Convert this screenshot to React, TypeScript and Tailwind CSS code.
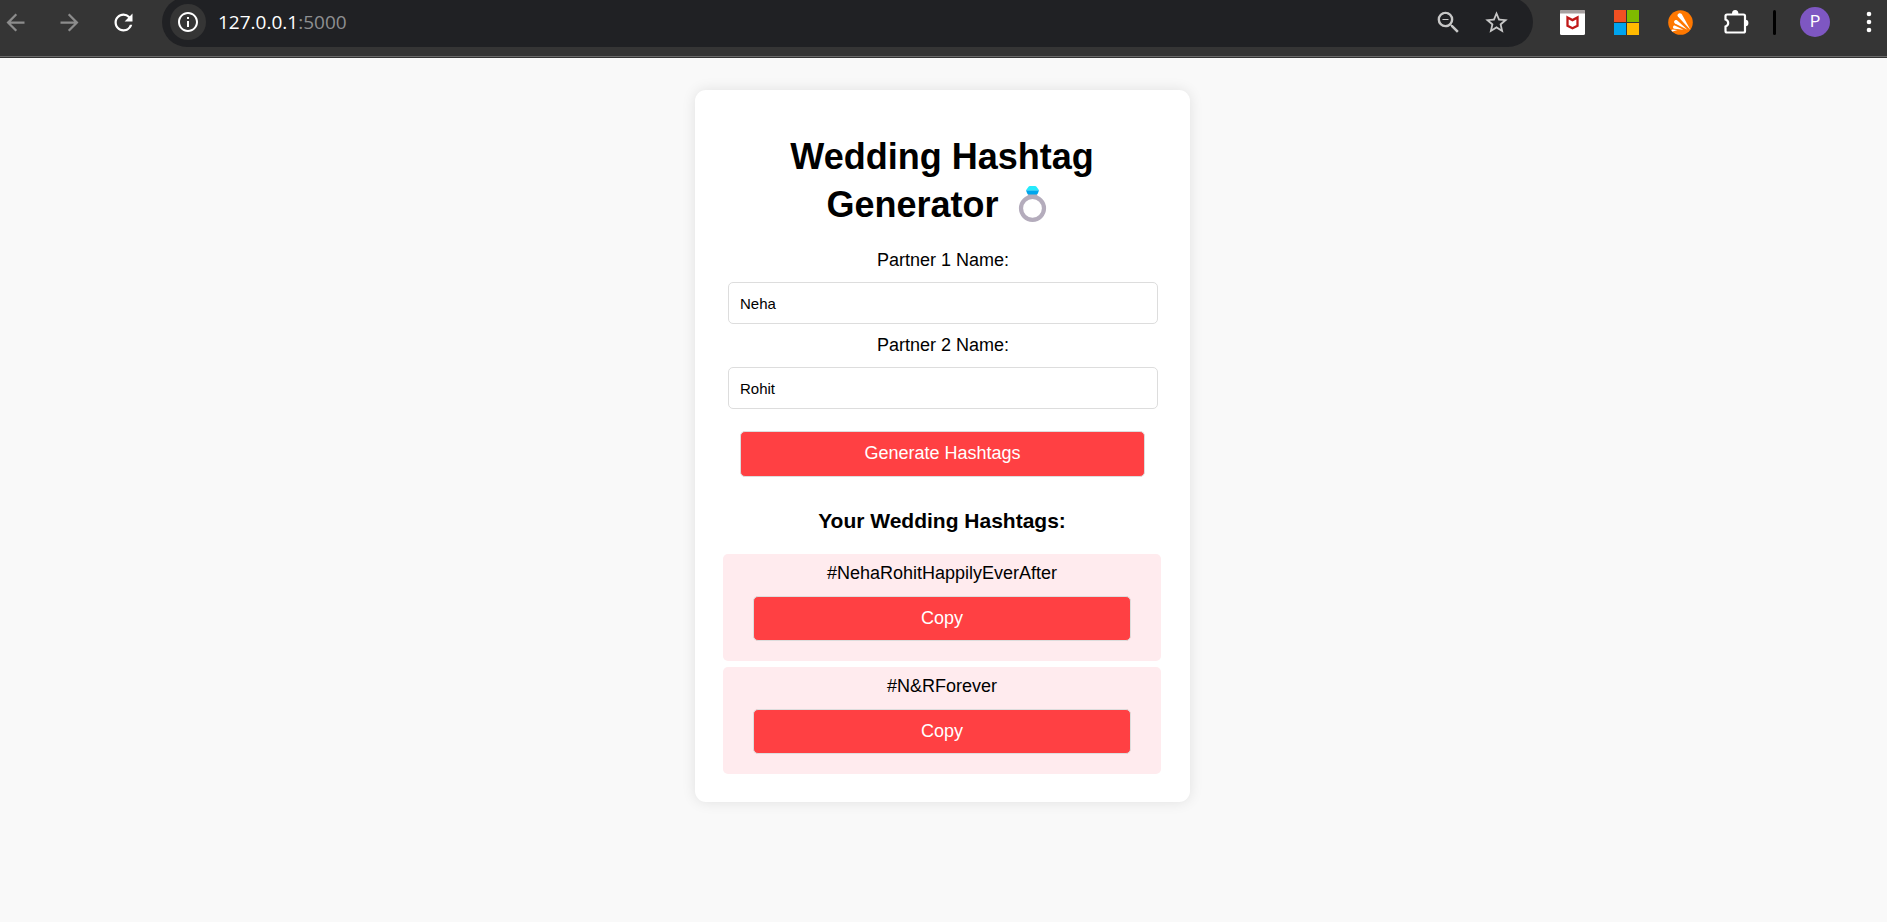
import { useState } from "react";
import {
  MdArrowBack,
  MdArrowForward,
  MdInfoOutline,
  MdOutlineZoomOut,
  MdRefresh,
  MdStarOutline,
} from "react-icons/md";

function ShieldIcon() {
  return (
    <svg viewBox="0 0 25 25" className="size-[25px]" aria-hidden="true">
      <rect width="25" height="25" rx="1.500" fill="#fff" />
      <path d="M1.500 0h22a1.500 1.500 0 0 1 1.500 1.500V3.500H0V1.500A1.500 1.500 0 0 1 1.500 0z" fill="#a7a0a0" />
      <path
        d="M7.500 7.500l5 2.600 5-2.600v8.200l-5 2.600-5-2.600z"
        fill="none"
        stroke="#c01818"
        strokeWidth="2.300"
      />
    </svg>
  );
}

function SquaresIcon() {
  return (
    <svg viewBox="0 0 25 25" className="size-[25px]" aria-hidden="true">
      <path d="M0 0h12v12H0z" fill="#f25022" />
      <path d="M13 0h12v12H13z" fill="#7fba00" />
      <path d="M0 13h12v12H0z" fill="#00a4ef" />
      <path d="M13 13h12v12H13z" fill="#ffb900" />
    </svg>
  );
}

function WingIcon() {
  return (
    <svg viewBox="0 0 25 25" className="size-[25px]" aria-hidden="true">
      <circle cx="12.500" cy="12.500" r="12.300" fill="#ff7800" />
      <path d="M22.500 20L9.900 6.600C8.400 4.500 11.600 2 13.700 4z" fill="#fff" />
      <path d="M19.500 19.800L7 13.500c-2-1.300-.4-4.200 2-3.200z" fill="#fff" />
      <path d="M15.500 19.700l-9.300-.9c-1.900-.4-1.500-3.400.6-3.200z" fill="#fff" />
      <path d="M9.500 19.900L4.600 21.400c-1.300.2-1.500-1.500-.3-1.800z" fill="#fff" />
    </svg>
  );
}

function PuzzleIcon() {
  return (
    <svg viewBox="0 0 27 27" className="size-[27px]" aria-hidden="true">
      <path
        d="M5 5.500h16.500a1.500 1.500 0 0 1 1.500 1.500v15a1.500 1.500 0 0 1-1.500 1.500H5a1.500 1.500 0 0 1-1.500-1.500v-4.500c3.600-1.200 3.600-5.800 0-7V7a1.500 1.500 0 0 1 1.500-1.500z"
        fill="none"
        stroke="#fff"
        strokeWidth="2.200"
      />
      <path d="M10 4.800a3.200 3.700 0 0 1 6.400 0v1h-6.400zM23 10.800h.4a3 3.200 0 0 1 0 6.400H23z" fill="#fff" />
    </svg>
  );
}

function MoreIcon() {
  return (
    <svg viewBox="0 0 24 24" className="size-6" fill="#fff" aria-hidden="true">
      <circle cx="12" cy="4" r="2.300" />
      <circle cx="12" cy="12" r="2.300" />
      <circle cx="12" cy="20" r="2.300" />
    </svg>
  );
}

function RingIcon() {
  return (
    <svg viewBox="1 0 49 36" className="inline-block h-9 w-[49px] align-[-5px]" role="img" aria-label="ring">
      <circle cx="24.500" cy="22.300" r="11.500" fill="none" stroke="#b4acbc" strokeWidth="4.200" />
      <path d="M20 7.500h9l.6 4.500H19.400z" fill="#b4acbc" />
      <path d="M18 4.200h13L29.800 7.500Q29.300 8.500 28 8.500h-7q-1.300 0-1.800-1z" fill="#00a6ed" />
      <path d="M20.500.8Q21 0 22 0h5q1 0 1.500.8L31 4.200H18z" fill="#26eafc" />
    </svg>
  );
}

function BrowserBar() {
  return (
    <header className="overflow-hidden border-b border-[#333333] bg-[#353535]">
      <div className="border-b border-[#6a6a6a] pb-3">
        <div className="flex h-11 items-center gap-[25px] pr-[6px] pl-[2px]">
          <nav className="flex items-center gap-[27px]">
            <button type="button" aria-label="Back" className="text-[#8c8c8c]">
              <MdArrowBack size={27} />
            </button>
            <button type="button" aria-label="Forward" className="text-[#8c8c8c]">
              <MdArrowForward size={27} />
            </button>
            <button type="button" aria-label="Reload" className="text-white">
              <MdRefresh size={27} />
            </button>
          </nav>
          <div className="flex h-[50px] flex-1 items-center rounded-full bg-[#202124] pr-[23px] pl-2">
            <button
              type="button"
              aria-label="Site information"
              className="flex size-9 items-center justify-center rounded-full bg-[#353535] text-white"
            >
              <MdInfoOutline size={24} />
            </button>
            <p className="flex-1 pl-3 font-['Open_Sans',sans-serif] text-[19px] leading-6 text-[#8e8f91]">
              <span className="text-white">127.0.0.1</span>:5000
            </p>
            <div className="flex items-center gap-5 text-[#c7c7c7]">
              <button type="button" aria-label="Zoom out">
                <MdOutlineZoomOut size={29} />
              </button>
              <button type="button" aria-label="Bookmark">
                <MdStarOutline size={27} />
              </button>
            </div>
          </div>
          <div className="flex items-center gap-[29px] px-[2px]">
            <button type="button" aria-label="Web protection">
              <ShieldIcon />
            </button>
            <button type="button" aria-label="Apps">
              <SquaresIcon />
            </button>
            <button type="button" aria-label="Security">
              <WingIcon />
            </button>
            <div className="flex items-center gap-6">
              <button type="button" aria-label="Extensions">
                <PuzzleIcon />
              </button>
              <span className="h-[25px] w-[3px] rounded-full bg-black" />
              <button
                type="button"
                aria-label="Profile"
                className="flex size-[30px] items-center justify-center rounded-full bg-[#7e57c2] font-['Roboto',sans-serif] text-base leading-5 text-white"
              >
                P
              </button>
            </div>
          </div>
          <button type="button" aria-label="Menu">
            <MoreIcon />
          </button>
        </div>
      </div>
    </header>
  );
}

type NameFieldProps = {
  id: string;
  label: string;
  value: string;
  onChange: (value: string) => void;
};

function NameField({ id, label, value, onChange }: NameFieldProps) {
  return (
    <div className="flex flex-col gap-[10px]">
      <label htmlFor={id}>{label}</label>
      <input
        id={id}
        type="text"
        value={value}
        onChange={(event) => onChange(event.target.value)}
        className="h-[42px] w-full rounded-[5px] border border-[#dddddd] bg-white px-[11px] text-[15px] outline-none"
      />
    </div>
  );
}

const buttonStyle = "w-full rounded-[5px] border border-[#dddddd] bg-[#ff4043] text-white";

function makeHashtags(first: string, second: string) {
  return [`#${first}${second}HappilyEverAfter`, `#${first.charAt(0)}&${second.charAt(0)}Forever`];
}

export default function App() {
  const [first, setFirst] = useState("Neha");
  const [second, setSecond] = useState("Rohit");
  const [hashtags, setHashtags] = useState(() => makeHashtags("Neha", "Rohit"));

  return (
    <div className="flex min-h-screen flex-col bg-[#f9f9f9] font-['Liberation_Sans',Arial,sans-serif] text-lg leading-6 text-black">
      <BrowserBar />
      <main className="flex-1 py-8 pr-[2px]">
        <section className="mx-auto w-full max-w-[495px] rounded-[11px] bg-white pt-[43px] pr-[29px] pb-7 pl-7 text-center shadow-[0_0_14px_rgba(0,0,0,0.1)]">
          <h1 className="text-4xl leading-[48px] font-bold">
            Wedding Hashtag
            <br />
            Generator <RingIcon />
          </h1>
          <form
            className="mt-[19px]"
            onSubmit={(event) => {
              event.preventDefault();
              setHashtags(makeHashtags(first, second));
            }}
          >
            <div className="flex flex-col gap-[9px] pr-[3px] pl-[5px]">
              <NameField id="partner1" label="Partner 1 Name:" value={first} onChange={setFirst} />
              <NameField id="partner2" label="Partner 2 Name:" value={second} onChange={setSecond} />
            </div>
            <div className="mt-[22px] pr-4 pl-[17px]">
              <button type="submit" className={`${buttonStyle} block h-[46px] pb-[2px]`}>
                Generate Hashtags
              </button>
            </div>
          </form>
          <h3 className="mt-[30px] text-[21px] leading-7 font-bold">Your Wedding Hashtags:</h3>
          <ul className="mt-[19px] flex flex-col gap-[6px]">
            {hashtags.map((tag) => (
              <li key={tag} className="rounded-[5px] bg-[#ffebee] px-[30px] pt-[7px] pb-5">
                <p>{tag}</p>
                <button
                  type="button"
                  className={`${buttonStyle} mt-[11px] block h-[45px] pb-[2px]`}
                  onClick={() => navigator.clipboard.writeText(tag)}
                >
                  Copy
                </button>
              </li>
            ))}
          </ul>
        </section>
      </main>
    </div>
  );
}
